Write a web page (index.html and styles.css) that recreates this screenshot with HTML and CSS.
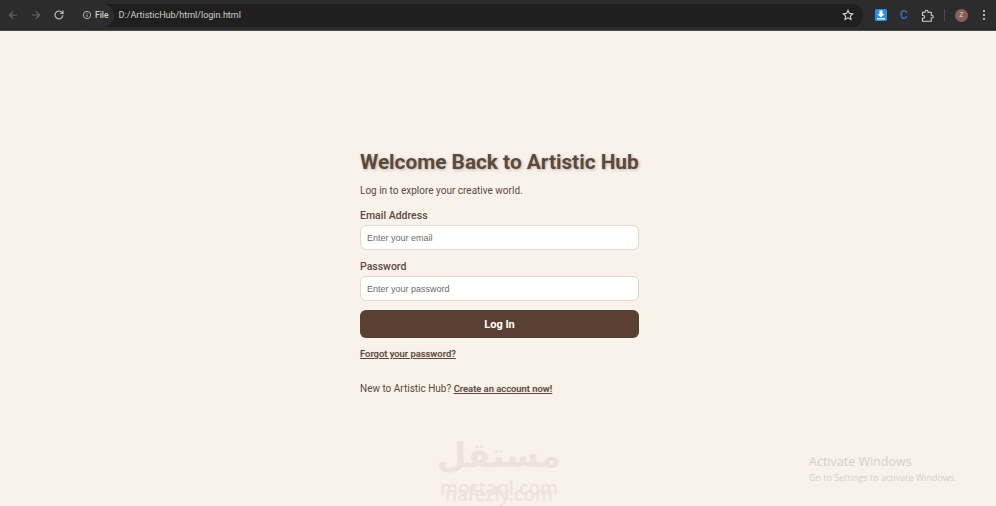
FILE: index.html
```html
<!DOCTYPE html>
<html>
<head>
  <meta charset="UTF-8">
  <title>Login - Artistic Hub</title>
  <meta name="viewport" content="width=device-width, initial-scale=1">
  <link rel="stylesheet" href="styles.css">
</head>
<body>

  <div class="toolbar">
    <div class="nav">
      <svg class="nav-icon dim" viewBox="0 0 12 12"><path d="M10 6H2.5M6 2.5 2.500 6 6 9.500"/></svg>
      <svg class="nav-icon dim" viewBox="0 0 12 12"><path d="M2 6h7.500M6 2.500 9.500 6 6 9.500"/></svg>
      <svg class="nav-icon" viewBox="0 0 12 12"><path d="M9.800 6.200A3.900 3.900 0 1 1 8.600 3.100L10 4.400M10 1.600v2.900H7.200"/></svg>
    </div>
    <div class="omnibox">
      <div class="chip">
        <svg class="chip-icon" viewBox="0 0 12 12"><circle cx="6" cy="6" r="4.400"/><path d="M6 5.400v3M6 3.400v1"/></svg>
        <span>File</span>
      </div>
      <span class="url">D:/ArtisticHub/html/login.html</span>
      <svg class="star" viewBox="0 0 12 12"><path d="M6 1.300 7.400 4.400l3.400.4-2.500 2.300.7 3.400L6 8.800l-3 1.700.7-3.400L1.200 4.800l3.400-.4z"/></svg>
    </div>
    <div class="extensions">
      <svg class="ext-download" viewBox="0 0 12 12"><rect width="12" height="12" rx="1.500" fill="#2b8fe0"/><path d="M4.400 1.500h3.200v3.600h2L6 8.400 2.400 5.100h2z" fill="#fff"/><rect x="2" y="9.200" width="8" height="1.300" fill="#fff"/></svg>
      <span class="ext-c">C</span>
      <svg class="ext-puzzle" viewBox="0 0 13 13"><path d="M1.500 3.200h2.700V2.600a1.400 1.400 0 0 1 2.800 0v.6h3.300v3h.6a1.400 1.400 0 0 1 0 2.800h-.6v3.200H1.500V9.300h.7a1.400 1.400 0 0 0 0-2.800h-.7z"/></svg>
      <span class="divider"></span>
      <span class="avatar">Z</span>
      <span class="menu-dots"><i></i><i></i><i></i></span>
    </div>
  </div>

  <main class="page">
    <form class="login">
      <h1>Welcome Back to Artistic Hub</h1>
      <p class="intro">Log in to explore your creative world.</p>

      <label for="email">Email Address</label>
      <input type="text" id="email" placeholder="Enter your email">

      <label for="password">Password</label>
      <input type="password" id="password" placeholder="Enter your password">

      <button type="button">Log In</button>

      <a class="forgot" href="#">Forgot your password?</a>
      <p class="signup">New to Artistic Hub? <a href="#">Create an account now!</a></p>
    </form>

    <div class="watermark">
      <div class="wm-arabic">مستقل</div>
      <div class="wm-latin">mostaql.com</div>
      <div class="wm-latin wm-second">nafezly.com</div>
    </div>

    <div class="activate">
      <div class="activate-title">Activate Windows</div>
      <div class="activate-sub">Go to Settings to activate Windows.</div>
    </div>
  </main>

</body>
</html>
```

FILE: styles.css
```css
* {
  box-sizing: border-box;
}
html, body {
  height: 100%;
}
body {
  margin: 0;
  display: flex;
  flex-direction: column;
  overflow: hidden;
  font-family: Roboto, sans-serif;
  background: #f9f2ea;
}

/* browser chrome */
.toolbar {
  height: 31px;
  flex: none;
  display: flex;
  align-items: center;
  background: #2c2c2c;
  border-bottom: 1px solid #494947;
  padding: 0 6px 0 7px;
}
.nav {
  display: flex;
  gap: 11px;
  width: 70px;
}
.nav-icon {
  width: 12px;
  height: 12px;
  fill: none;
  stroke: #bdbdbd;
  stroke-width: 1.2;
}
.nav-icon.dim {
  stroke: #646464;
}
.omnibox {
  width: 786px;
  height: 23px;
  border-radius: 12px;
  background: #1f1f1f;
  display: flex;
  align-items: center;
  color: #cfcfcf;
  font-size: 9px;
}
.chip {
  display: flex;
  align-items: center;
  gap: 3px;
  height: 23px;
  padding: 0 5px;
  border-radius: 12px;
  background: #2d2d2d;
  font-weight: 500;
  font-size: 8.5px;
}
.chip-icon {
  width: 10px;
  height: 10px;
  fill: none;
  stroke: #c8c8c8;
  stroke-width: 1;
}
.url {
  margin-left: 5px;
  flex: 1;
}
.star {
  width: 12px;
  height: 12px;
  margin-right: 9px;
  fill: none;
  stroke: #d8d8d8;
  stroke-width: 1.1;
}
.extensions {
  flex: 1;
  display: flex;
  align-items: center;
  padding-left: 12px;
}
.ext-download {
  width: 12px;
  height: 12px;
}
.ext-c {
  margin-left: 13px;
  color: #3f6fc0;
  font-size: 12px;
  font-weight: 500;
}
.ext-puzzle {
  width: 13px;
  height: 13px;
  margin-left: 13px;
  fill: none;
  stroke: #cfcfcf;
  stroke-width: 1.1;
}
.divider {
  width: 1px;
  height: 12px;
  margin-left: 10px;
  background: #4c4c4c;
}
.avatar {
  width: 13px;
  height: 13px;
  margin-left: 10px;
  border-radius: 50%;
  background: #8a5f55;
  color: #e6dcd8;
  font-size: 7px;
  line-height: 13px;
  text-align: center;
}
.menu-dots {
  display: flex;
  flex-direction: column;
  gap: 2px;
  margin-left: 15px;
}
.menu-dots i {
  width: 2px;
  height: 2px;
  background: #b4b4b4;
}

/* page */
.page {
  flex: 1;
  position: relative;
  display: flex;
  justify-content: center;
  padding-top: 118px;
}
.login {
  width: 279px;
  margin-left: 3px;
  color: #5c493d;
}
h1 {
  margin: 0;
  font-size: 20.8px;
  line-height: 26px;
  font-weight: 700;
  white-space: nowrap;
  text-shadow: 1px 1px 3px rgba(90, 64, 50, 0.35);
}
.intro {
  margin: 9px 0 11px;
  font-size: 10px;
  line-height: 14px;
}
label {
  display: block;
  margin-top: 10px;
  font-size: 10.5px;
  line-height: 14px;
  font-weight: 500;
}
input {
  display: block;
  width: 100%;
  height: 25px;
  margin-top: 2px;
  padding: 0 6px;
  background: #fff;
  border: 1px solid #e2d8cc;
  border-radius: 6px;
  font-family: "Liberation Sans", sans-serif;
  font-size: 9px;
  outline: none;
}
input::placeholder {
  color: #6f6a66;
}
button {
  display: block;
  width: 100%;
  height: 28px;
  margin-top: 9px;
  background: #5a4032;
  color: #fff;
  border: none;
  border-radius: 6px;
  font-family: Roboto, sans-serif;
  font-size: 11px;
  font-weight: 700;
}
a {
  color: #5c493d;
  font-weight: 500;
  text-shadow: 0 0 1px rgba(90, 64, 50, 0.3);
}
.forgot {
  display: block;
  margin-top: 9px;
  font-size: 9.4px;
  line-height: 13px;
}
.signup {
  margin: 22px 0 0;
  font-size: 10px;
  line-height: 14px;
}
.signup a {
  font-size: 9.4px;
}

/* overlays on the screenshot */
.watermark {
  position: absolute;
  left: 420px;
  top: 404px;
  width: 158px;
  text-align: center;
  color: #ece4dc;
  pointer-events: none;
}
.wm-arabic {
  font-family: "DejaVu Sans", sans-serif;
  font-size: 34px;
  font-weight: 700;
  line-height: 40px;
}
.wm-latin {
  font-family: "Noto Sans", sans-serif;
  font-size: 19px;
  line-height: 16px;
  font-weight: 500;
  margin-top: 5px;
}
.wm-second {
  margin-top: -10px;
}
.activate {
  position: absolute;
  left: 809px;
  top: 422px;
  color: #d4cfcb;
  font-family: "Open Sans", sans-serif;
  pointer-events: none;
}
.activate-title {
  font-size: 12.5px;
  line-height: 17px;
}
.activate-sub {
  font-size: 9px;
  line-height: 14px;
  margin-top: 1px;
}
```
